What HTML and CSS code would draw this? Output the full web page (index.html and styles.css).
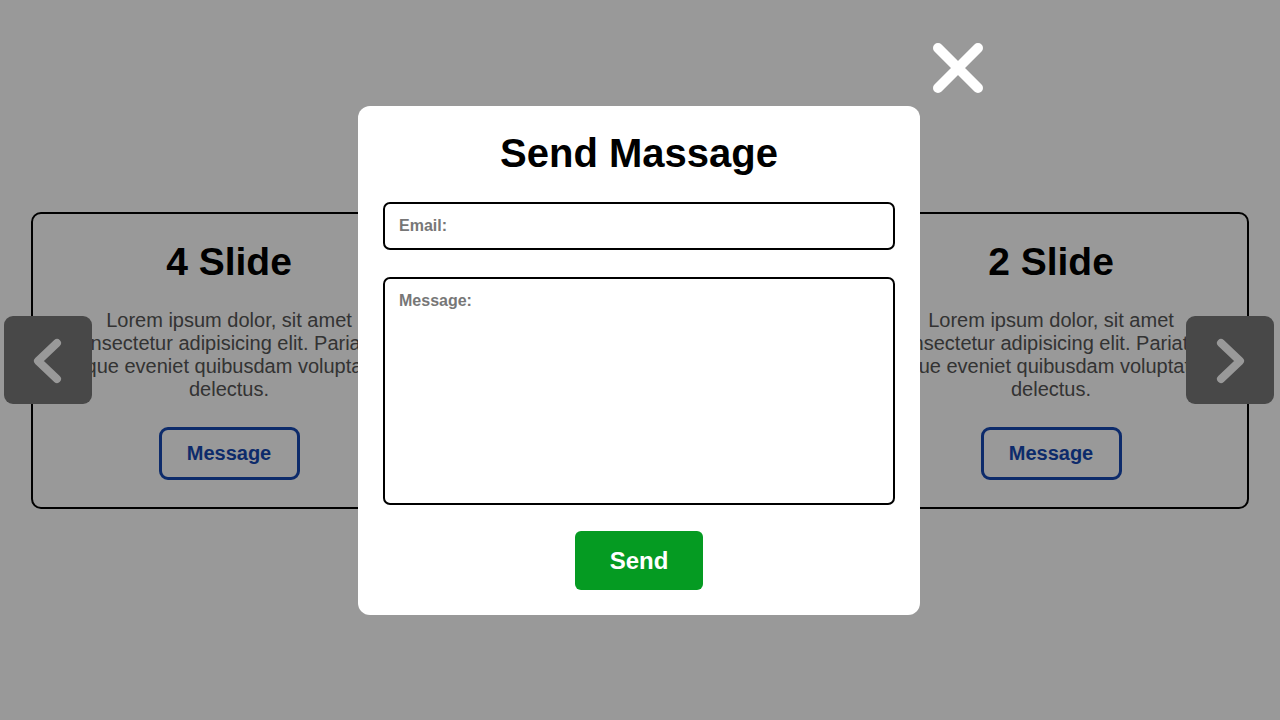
FILE: index.html
```html
<!DOCTYPE html>
<html lang="en">
<head>
<meta charset="utf-8">
<title>Send Massage</title>
<link rel="stylesheet" href="styles.css">
</head>
<body>
<main class="page">
  <section class="slider">
    <article class="card">
      <h2 class="card-title">4 Slide</h2>
      <p class="card-text">Lorem ipsum dolor, sit amet consectetur adipisicing elit. Pariatur, atque eveniet quibusdam voluptates delectus.</p>
      <button class="msg-btn" type="button">Message</button>
    </article>
    <article class="card">
      <h2 class="card-title">1 Slide</h2>
      <p class="card-text">Lorem ipsum dolor, sit amet consectetur adipisicing elit. Pariatur, atque eveniet quibusdam voluptates delectus.</p>
      <button class="msg-btn" type="button">Message</button>
    </article>
    <article class="card">
      <h2 class="card-title">2 Slide</h2>
      <p class="card-text">Lorem ipsum dolor, sit amet consectetur adipisicing elit. Pariatur, atque eveniet quibusdam voluptates delectus.</p>
      <button class="msg-btn" type="button">Message</button>
    </article>
    <button class="arrow arrow-left" type="button" aria-label="Previous">
      <svg viewBox="0 0 88 88" width="88" height="88"><path d="M53 27 L34 45 L53 63" fill="none" stroke="#fff" stroke-width="8" stroke-linecap="round" stroke-linejoin="round"/></svg>
    </button>
    <button class="arrow arrow-right" type="button" aria-label="Next">
      <svg viewBox="0 0 88 88" width="88" height="88"><path d="M35 27 L54 45 L35 63" fill="none" stroke="#fff" stroke-width="8" stroke-linecap="round" stroke-linejoin="round"/></svg>
    </button>
  </section>
</main>

<div class="overlay"></div>

<button class="close" type="button" aria-label="Close">
  <svg viewBox="0 0 50 50" width="50" height="50"><path d="M5 5 L45 45 M45 5 L5 45" fill="none" stroke="#fff" stroke-width="10" stroke-linecap="round"/></svg>
</button>

<form class="modal">
  <h1 class="modal-title">Send Massage</h1>
  <input class="field field-email" type="email" placeholder="Email:">
  <textarea class="field field-message" placeholder="Message:"></textarea>
  <div class="actions">
    <button class="send" type="button">Send</button>
  </div>
</form>
</body>
</html>
```

FILE: styles.css
```css
* {
  box-sizing: border-box;
}

html, body {
  margin: 0;
  padding: 0;
}

body {
  width: 1280px;
  height: 720px;
  overflow: hidden;
  background: #ffffff;
  font-family: "Liberation Sans", Arial, sans-serif;
  color: #000;
}

.page {
  height: 720px;
  display: flex;
  align-items: center;
}

.slider {
  position: relative;
  width: 100%;
  height: 720px;
  display: flex;
  align-items: center;
  gap: 15px;
  padding: 0 31px;
}

.card {
  flex: 1 1 0;
  height: 297px;
  border: 2px solid #000;
  border-radius: 10px;
  padding: 26px 20px 26px;
  display: flex;
  flex-direction: column;
  align-items: center;
  text-align: center;
}

.card-title {
  margin: 0 0 25px;
  font-size: 39px;
  line-height: 44px;
  font-weight: bold;
  color: #000;
}

.card-text {
  margin: 0 0 26px;
  font-size: 20px;
  line-height: 23px;
  color: #555;
}

.msg-btn {
  font-family: inherit;
  font-size: 20px;
  line-height: 23px;
  font-weight: bold;
  color: #1649b2;
  background: transparent;
  border: 3px solid #1649b2;
  border-radius: 9px;
  padding: 12px 25px;
  width: 141px;
  height: 53px;
}

.arrow {
  position: absolute;
  top: 316px;
  width: 88px;
  height: 88px;
  padding: 0;
  border: none;
  border-radius: 9px;
  background: #787878;
  display: flex;
  align-items: center;
  justify-content: center;
}

.arrow svg {
  display: block;
}

.arrow-left {
  left: 4px;
}

.arrow-right {
  right: 6px;
}

.overlay {
  position: fixed;
  inset: 0;
  background: rgba(0, 0, 0, 0.4);
}

.close {
  position: fixed;
  left: 933px;
  top: 43px;
  width: 50px;
  height: 50px;
  padding: 0;
  border: none;
  background: transparent;
}

.close svg {
  display: block;
}

.modal {
  position: fixed;
  left: 358px;
  top: 106px;
  width: 562px;
  height: 509px;
  background: #fff;
  border-radius: 12px;
  padding: 24px 25px 25px;
  display: flex;
  flex-direction: column;
}

.modal-title {
  margin: 0 0 26px;
  font-size: 40px;
  line-height: 46px;
  font-weight: bold;
  text-align: center;
  color: #000;
}

.field {
  display: block;
  width: 100%;
  border: 2px solid #000;
  border-radius: 7px;
  font-family: inherit;
  font-size: 16px;
  font-weight: bold;
  color: #333;
  background: #fff;
  outline: none;
}

.field::placeholder {
  color: #777;
  opacity: 1;
  font-weight: bold;
}

.field-email {
  height: 48px;
  padding: 0 14px;
  margin-bottom: 27px;
}

.field-message {
  height: 228px;
  padding: 13px 14px;
  line-height: 18px;
  resize: none;
  margin-bottom: 26px;
}

.actions {
  display: flex;
  justify-content: center;
}

.send {
  width: 128px;
  height: 59px;
  border: none;
  border-radius: 6px;
  background: #059b22;
  color: #fff;
  font-family: inherit;
  font-size: 24px;
  font-weight: bold;
  padding: 0;
}
```
